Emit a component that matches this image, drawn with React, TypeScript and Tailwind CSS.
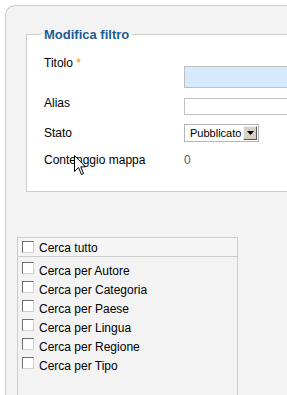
const filters = [
  'Cerca per Autore',
  'Cerca per Categoria',
  'Cerca per Paese',
  'Cerca per Lingua',
  'Cerca per Regione',
  'Cerca per Tipo',
];

const Check = () => (
  <span className="box-border inline-block h-[12px] w-[12px] shrink-0 border border-t-[#707070] border-l-[#707070] border-r-[#d0d0d0] border-b-[#d0d0d0] bg-white" />
);

const Cursor = () => (
  <svg
    className="absolute left-[74px] top-[155px]"
    width="13"
    height="22"
    viewBox="0 0 13 22"
  >
    <path
      d="M0.5 0.5 L0.5 16.5 L4.5 12.5 L7.5 19.5 L9.5 18.5 L6.8 11.8 L11.5 11.8 Z"
      fill="white"
      stroke="black"
      strokeWidth="1"
      strokeLinejoin="miter"
    />
  </svg>
);

export default function App() {
  return (
    <div
      className="relative h-[395px] w-[287px] overflow-hidden bg-white text-[12px] text-black"
      style={{ fontFamily: '"Liberation Sans", Arial, sans-serif' }}
    >
      <div className="ml-[5px] mt-[5px] h-[400px] rounded-tl-[10px] border-l border-t border-[#cccccc] bg-[#f3f3f3] pt-[21px]">
        <fieldset className="ml-[20px] w-[320px] border border-[#cccccc] bg-white pb-[24px] pl-[14px]">
          <legend className="px-[3px] text-[13px] font-bold leading-[15px] text-[#1b5c96]">
            Modifica filtro
          </legend>

          <div className="mt-[14px] flex items-start pl-[3px]">
            <div className="w-[140px] leading-[14px]">
              Titolo <span className="text-[#f08c00]">*</span>
            </div>
            <div className="mt-[10px] h-[22px] w-[140px] border border-[#c0c0c0] bg-[#d5eafd]" />
          </div>

          <div className="mt-[8px] flex items-start pl-[3px]">
            <div className="w-[140px] leading-[14px]">Alias</div>
            <div className="mt-[2px] h-[17px] w-[140px] border border-[#c0c0c0] bg-white" />
          </div>

          <div className="mt-[9px] flex items-start pl-[3px]">
            <div className="mt-[2px] w-[140px] leading-[14px]">Stato</div>
            <div className="flex h-[18px] w-[75px] items-center border border-[#b5b5b5] bg-white pl-[5px] text-[11px]">
              <span className="flex-1 leading-[14px]">Pubblicato</span>
              <span className="mr-[1px] flex h-[14px] w-[14px] items-center justify-center border border-t-[#f4f4f4] border-l-[#f4f4f4] border-r-[#555] border-b-[#555] bg-[#d4d0c8]">
                <svg width="7" height="4" viewBox="0 0 7 4">
                  <path d="M0 0 H7 L3.5 4 Z" fill="black" />
                </svg>
              </span>
            </div>
          </div>

          <div className="mt-[11px] flex items-start pl-[3px]">
            <div className="w-[140px] leading-[14px]">Contenggio mappa</div>
            <div className="leading-[14px] text-[#555]">0</div>
          </div>
        </fieldset>

        <div className="ml-[11px] mt-[45px] h-[200px] w-[221px] border border-[#cccccc]">
          <div className="flex h-[19px] items-center gap-[5px] border-b border-[#cccccc] bg-[#f5f5f5] pl-[4px]">
            <Check />
            <span className="mt-[1px] leading-[14px]">Cerca tutto</span>
          </div>
          <div className="flex flex-col pl-[4px] pt-[5px]">
            {filters.map((f) => (
              <div key={f} className="flex h-[19px] items-start gap-[5px]">
                <Check />
                <span className="mt-[2px] leading-[14px]">{f}</span>
              </div>
            ))}
          </div>
        </div>
      </div>
      <Cursor />
    </div>
  );
}
